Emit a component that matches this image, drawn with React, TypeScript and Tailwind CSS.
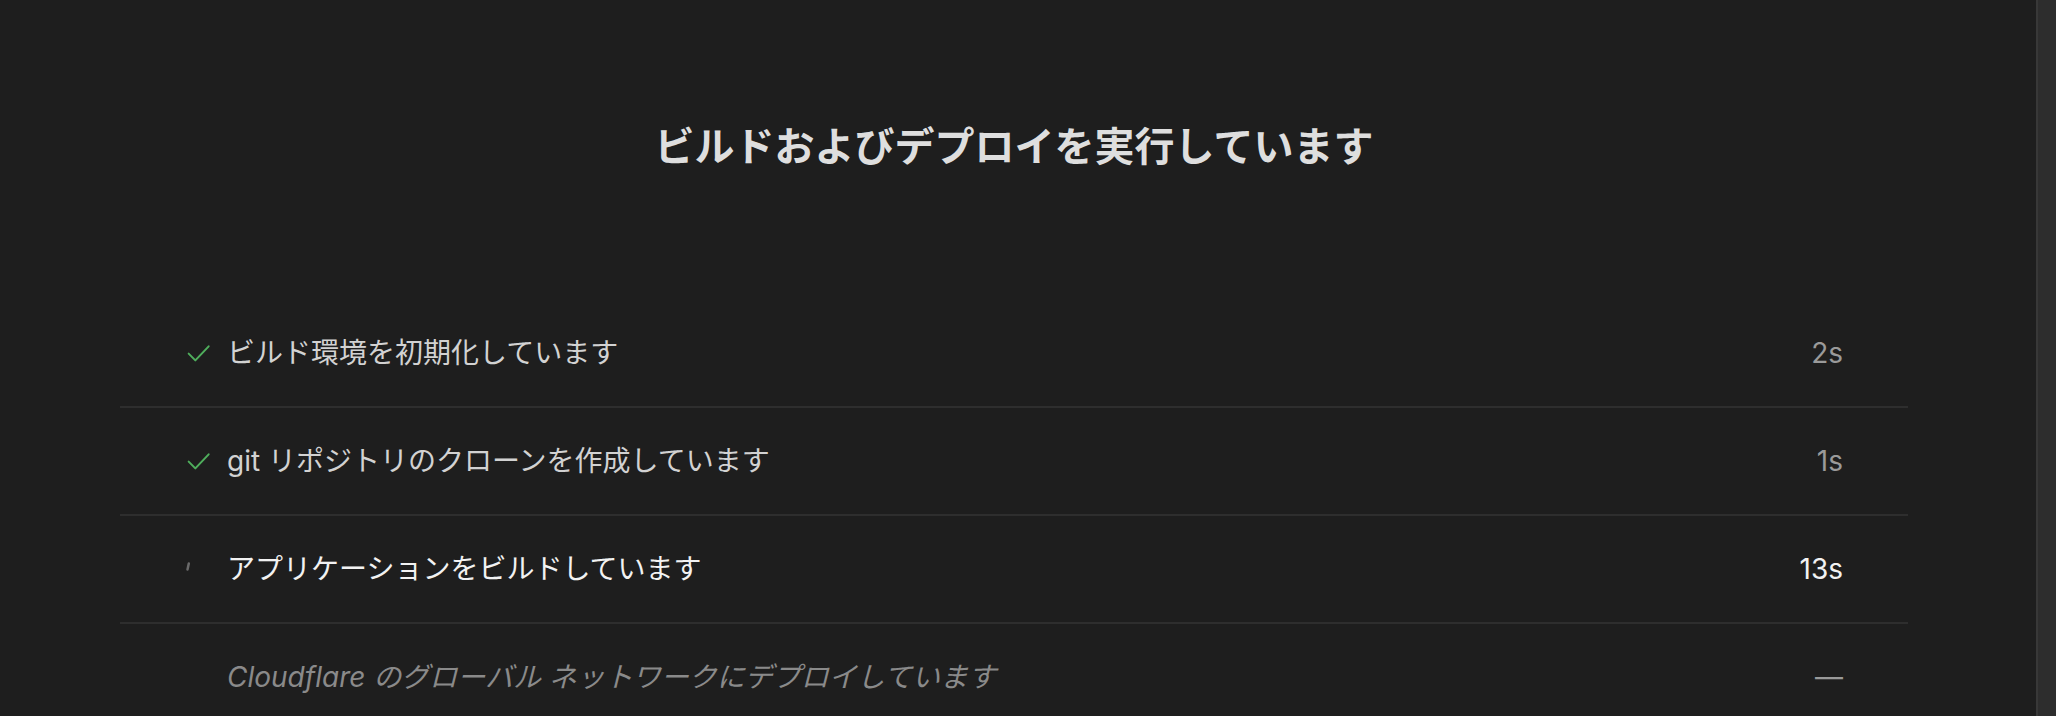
import React from 'react';

type StepState = 'done' | 'running' | 'pending';

interface Step {
  label: string;
  time: string;
  state: StepState;
}

const steps: Step[] = [
  { label: 'ビルド環境を初期化しています', time: '2s', state: 'done' },
  { label: 'git リポジトリのクローンを作成しています', time: '1s', state: 'done' },
  { label: 'アプリケーションをビルドしています', time: '13s', state: 'running' },
  { label: 'Cloudflare のグローバル ネットワークにデプロイしています', time: '—', state: 'pending' },
];

const StepIcon: React.FC<{ state: StepState }> = ({ state }) => {
  if (state === 'done') {
    return (
      <svg width="32" height="32" viewBox="0 0 24 24" fill="none" stroke="#4fae5c" strokeWidth="1.5" strokeLinecap="round" strokeLinejoin="round">
        <path d="M5 12.5l5 5L20 7" />
      </svg>
    );
  }
  if (state === 'running') {
    // spinner caught mid-turn: only a short arc shows
    return (
      <svg width="32" height="32" viewBox="0 0 32 32" fill="none" stroke="#6a6a6a" strokeWidth="2.5" strokeLinecap="round">
        <path d="M5.5 16.5 L6.8 10.5" />
      </svg>
    );
  }
  return <div className="w-8 h-8" />;
};

export default function App() {
  return (
    <div
      className="h-[716px] w-full overflow-hidden bg-[#1e1e1e] flex"
      style={{ fontFamily: 'Inter, "Noto Sans CJK JP", sans-serif' }}
    >
      {/* main column */}
      <div className="flex-1 pt-[123px] pl-[120px] pr-[128px]">
        <h1 className="text-center text-[40px] leading-[48px] font-bold text-[#dedede]">
          ビルドおよびデプロイを実行しています
        </h1>

        <div className="mt-[129px]">
          {steps.map((step) => (
            <div
              key={step.label}
              className="h-[108px] flex items-center pl-[62px] pr-[65px] border-b-2 border-[#2e2e2e]"
            >
              <StepIcon state={step.state} />
              <span
                className={`ml-[13px] flex-1 text-[28px] leading-[36px] ${
                  step.state === 'running'
                    ? 'text-[#f2f2f2]'
                    : step.state === 'pending'
                    ? 'text-[#8a8a8a] italic'
                    : 'text-[#d2d2d2]'
                }`}
              >
                {step.label}
              </span>
              <span
                className={`text-[28px] leading-[36px] ${
                  step.state === 'running' ? 'text-[#f2f2f2]' : 'text-[#9a9a9a]'
                }`}
              >
                {step.time}
              </span>
            </div>
          ))}
        </div>
      </div>

      {/* scrollbar track */}
      <div className="w-[20px] h-full bg-[#2d2d2d] border-l-2 border-[#383838]" />
    </div>
  );
}
